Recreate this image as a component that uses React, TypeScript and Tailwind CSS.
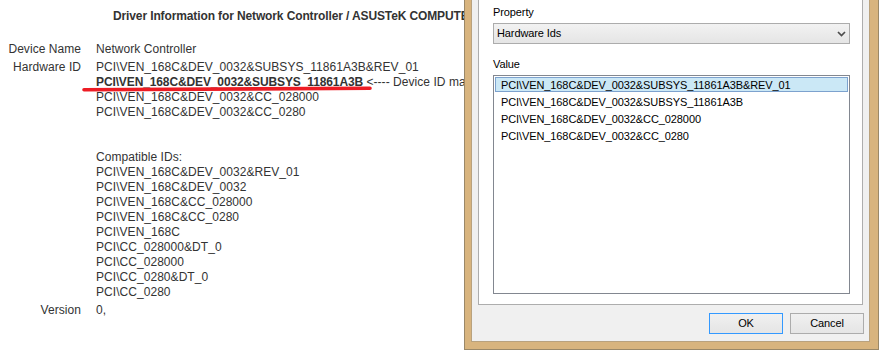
const HW = [
  "PCI\\VEN_168C&DEV_0032&SUBSYS_11861A3B&REV_01",
];
const HW_REST = ["PCI\\VEN_168C&DEV_0032&CC_028000", "PCI\\VEN_168C&DEV_0032&CC_0280"];
const COMPAT = [
  "PCI\\VEN_168C&DEV_0032&REV_01",
  "PCI\\VEN_168C&DEV_0032",
  "PCI\\VEN_168C&CC_028000",
  "PCI\\VEN_168C&CC_0280",
  "PCI\\VEN_168C",
  "PCI\\CC_028000&DT_0",
  "PCI\\CC_028000",
  "PCI\\CC_0280&DT_0",
  "PCI\\CC_0280",
];
const LIST = [
  "PCI\\VEN_168C&DEV_0032&SUBSYS_11861A3B&REV_01",
  "PCI\\VEN_168C&DEV_0032&SUBSYS_11861A3B",
  "PCI\\VEN_168C&DEV_0032&CC_028000",
  "PCI\\VEN_168C&DEV_0032&CC_0280",
];

export default function App() {
  return (
    <div className="flex h-[350px] w-[879px] overflow-hidden bg-white">
      {/* Left: web page behind */}
      <div className="relative w-[464px] shrink-0 overflow-hidden whitespace-nowrap font-['Liberation_Sans',Arial,sans-serif] text-[12px] leading-[15px] tracking-[0.05px] text-[#333]">
        <div className="pl-[113px] pt-[9px] font-bold tracking-[-0.12px]">
          Driver Information for Network Controller / ASUSTeK COMPUTER INC.
        </div>
        <div className="mt-[18px] grid grid-cols-[81px_auto] gap-x-[15px] gap-y-[3px]">
          <div className="text-right">Device Name</div>
          <div>Network Controller</div>
          <div className="text-right">Hardware ID</div>
          <div>
            {HW.map((t) => (
              <div key={t}>{t}</div>
            ))}
            <div>
              <span className="font-bold tracking-[-0.12px]">{"PCI\\VEN_168C&DEV_0032&SUBSYS_11861A3B"}</span>
              {" <---- Device ID match"}
            </div>
            {HW_REST.map((t) => (
              <div key={t}>{t}</div>
            ))}
            <div className="h-[30px]" />
            <div>Compatible IDs:</div>
            {COMPAT.map((t) => (
              <div key={t}>{t}</div>
            ))}
          </div>
          <div className="text-right">Version</div>
          <div>0,</div>
        </div>
        <svg
          className="absolute left-[82px] top-[85px]"
          width="292"
          height="8"
          viewBox="0 0 292 8"
        >
          <line x1="2" y1="4.8" x2="288" y2="3.2" stroke="#ed1c24" strokeWidth="3.6" strokeLinecap="round" />
        </svg>
      </div>

      {/* Right: dialog */}
      <div className="flex h-[350px] w-[415px] shrink-0 flex-col border-x border-b border-[#9a8868] bg-[#d8b47e] pb-[7px] pl-[6px] pr-[8px] font-['Liberation_Sans',Arial,sans-serif] text-[11px] tracking-[-0.1px] text-black">
        <div className="flex flex-1 flex-col border-x border-b border-[#b9a27e] bg-[#f0f0f0]">
          <div className="mx-[6px] flex flex-1 flex-col border-x border-b border-[#adadad] bg-white pb-[10px] pl-[14px] pr-[12px] pt-[5px]">
            <div className="leading-[15px]">Property</div>
            <div className="mt-[3px] flex h-[21px] items-center justify-between border border-[#acacac] bg-gradient-to-b from-[#f2f2f2] to-[#e5e5e5] pl-[3px] pr-[3px] leading-[19px]">
              <span>Hardware Ids</span>
              <svg width="9" height="6" viewBox="0 0 9 6">
                <polyline points="1,1 4.5,4.5 8,1" fill="none" stroke="#4d4d4d" strokeWidth="1.7" />
              </svg>
            </div>
            <div className="mt-[13px] leading-[15px]">Value</div>
            <div className="mt-[3px] flex-1 border border-[#828790] bg-white pt-[1px]">
              {LIST.map((t, i) =>
                i === 0 ? (
                  <div
                    key={t}
                    className="mx-[1px] mb-[2px] h-[15px] border border-[#7da2ce] bg-[#cbe8f6] pl-[5px] leading-[15px]"
                  >
                    {t}
                  </div>
                ) : (
                  <div key={t} className="ml-[2px] h-[17px] pl-[5px] leading-[17px]">
                    {t}
                  </div>
                )
              )}
            </div>
          </div>
          <div className="flex justify-end gap-[7px] pb-[7px] pr-[5px] pt-[8px]">
            <button className="flex h-[21px] w-[74px] items-center justify-center border border-[#3399ff] bg-gradient-to-b from-[#f0f0f0] to-[#e5e5e5] leading-[19px]">
              OK
            </button>
            <button className="flex h-[21px] w-[74px] items-center justify-center border border-[#acacac] bg-gradient-to-b from-[#f0f0f0] to-[#e5e5e5] leading-[19px]">
              Cancel
            </button>
          </div>
        </div>
      </div>
    </div>
  );
}
